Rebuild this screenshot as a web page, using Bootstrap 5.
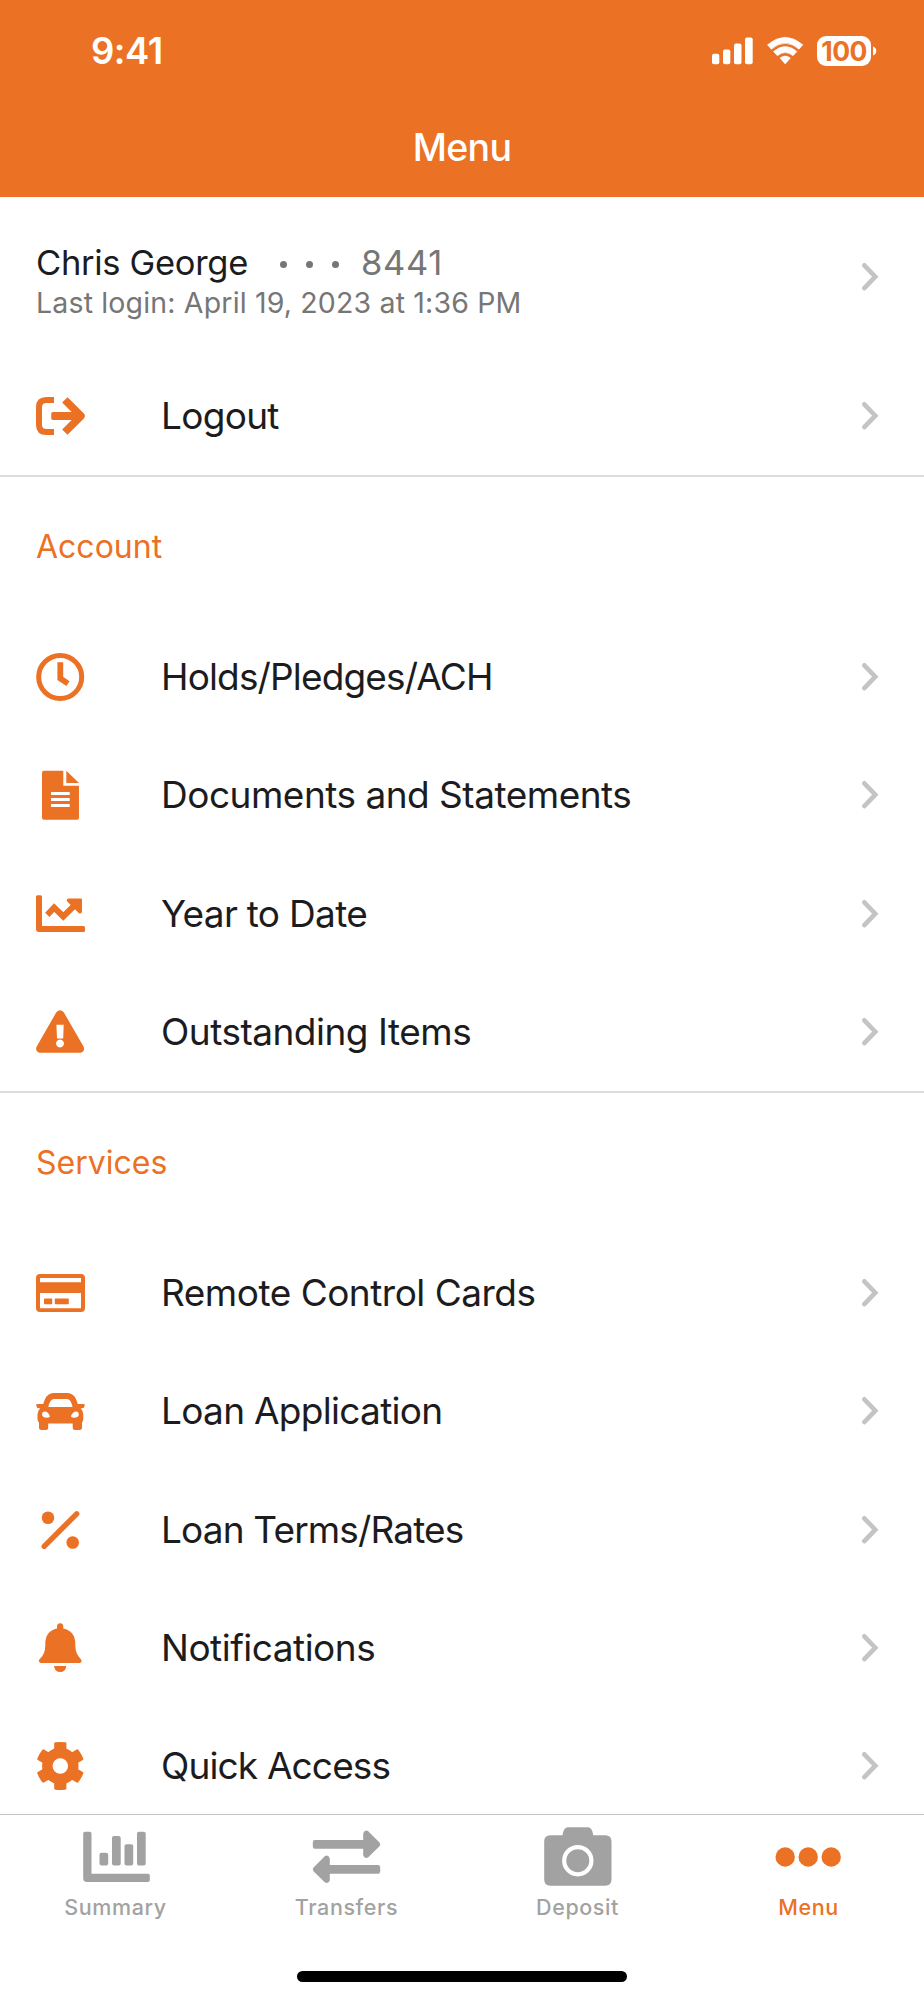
<!DOCTYPE html>
<html lang="en">
<head>
<meta charset="utf-8">
<meta name="viewport" content="width=device-width, initial-scale=1">
<title>Menu</title>
<link href="https://cdn.jsdelivr.net/npm/bootstrap@5.3.0/dist/css/bootstrap.min.css" rel="stylesheet">
<style>
:root{--brand:#eb7125;--ink:#1c1c1e;--muted-ink:#767676}
body{font-family:Inter,"Liberation Sans",sans-serif;color:var(--ink);background:#fff}
.screen{width:924px;height:2000px;overflow:hidden}
.topbar{background:var(--brand);height:197px}
.statusbar{height:101px;padding:0 47px 0 91px}
.clock{font-size:36.5px;font-weight:600;letter-spacing:-.5px;line-height:1;padding-top:1px}
.battery{width:54px;height:30px;border-radius:9px;background:#fff;color:var(--brand);font-size:26.5px;font-weight:700;line-height:30px;letter-spacing:-.6px}
.page-title{font-size:37.5px;font-weight:500;letter-spacing:-.7px;line-height:93px}
.menu-group{border-bottom:2px solid #dcdcdc}
.menu-row{height:118.3px;padding:0 44px 0 36px;color:inherit;text-decoration:none}
.menu-row .glyph{width:50px;height:50px;fill:var(--brand);margin-right:75px;flex:none}
.row-label{font-size:37px;letter-spacing:-.5px;line-height:50px}
.row-label.snug{letter-spacing:-.7px}
.row-label.tight{letter-spacing:-.85px}
.chev{width:20px;height:30px;fill:none;stroke:#c4c4c6;stroke-width:4.6;stroke-linecap:round}
.profile{height:159.7px;padding:46px 44px 0 36px}
.profile .chev{margin-top:19px}
.who{font-size:34.5px;line-height:40px;letter-spacing:-.3px}
.login{font-size:28.5px;line-height:39px;color:var(--muted-ink);letter-spacing:.16px}
.acct{color:var(--muted-ink);letter-spacing:.7px}
.dots{gap:19px;margin:2px 22px 0 8px}
.dot3{width:7px;height:7px;border-radius:50%;background:var(--muted-ink)}
.group-title{color:var(--brand);font-size:32px;line-height:140px;height:140.9px;padding-left:36px}
.tabs{border-top:1px solid #c4c4c6;height:186px;background:#fff}
.tab-item{color:#a2a2a2;font-size:21.5px;font-weight:500;letter-spacing:.6px;line-height:26px;text-decoration:none;padding-top:11px}
.tab-item svg{width:70px;height:62px;fill:currentColor;margin-bottom:6px}
.tab-item.current{color:var(--brand)}
.homebar{width:330px;height:11px;border-radius:6px;background:#000;bottom:18px}
</style>
</head>
<body>
<svg class="d-none"><symbol id="chev" viewBox="0 0 20 30"><path d="M4.300 3.300 15.300 14.700 4.300 26.100"/></symbol></svg>
<div class="screen d-flex flex-column position-relative">
<header class="topbar text-white flex-shrink-0">
  <div class="statusbar d-flex align-items-center justify-content-between">
    <span class="clock">9:41</span>
    <div class="d-flex align-items-center">
      <svg width="105" height="30" viewBox="712 35.500 105 30" fill="#fff">
        <rect x="712" y="53.300" width="7.300" height="10.400" rx="2"/><rect x="723" y="49" width="7.300" height="14.700" rx="2"/><rect x="734" y="43" width="7.500" height="20.700" rx="2"/><rect x="745" y="37" width="7.700" height="26.700" rx="2"/>
        <path d="M767.500 44.300Q785.200 29.300 802.900 44.300L799 48.700Q785.200 37 771.400 48.700ZM773.500 51Q785.200 41.200 796.900 51L793 55.200Q785.200 49 777.400 55.200ZM780 57.500Q785.200 53.700 790.400 57.500L785.200 63.400Z" stroke="#fff" stroke-width=".6" stroke-linejoin="round"/>
      </svg>
      <div class="battery text-center">100</div>
      <svg width="6" height="30" viewBox="0 0 6 30" fill="#fff"><path d="M2 10.500Q5.300 11.800 5.300 15T2 19.500Z"/></svg>
    </div>
  </div>
  <div class="page-title text-center">Menu</div>
</header>
<main class="flex-grow-1 overflow-hidden">
  <section class="menu-group">
    <div class="profile d-flex justify-content-between">
      <div>
        <div class="who d-flex align-items-center"><span class="me-4">Chris George</span><span class="d-flex dots"><i class="dot3"></i><i class="dot3"></i><i class="dot3"></i></span><span class="acct">8441</span></div>
        <div class="login">Last login: April 19, 2023 at 1:36 PM</div>
      </div>
      <svg class="chev"><use href="#chev"/></svg>
    </div>
    <a href="#" class="menu-row d-flex align-items-center"><svg class="glyph" viewBox="0 0 50 50"><path d="M18 9H10.500Q3 9 3 16V34Q3 41 10.500 41H18" fill="none" stroke="#eb7125" stroke-width="6"/><path d="M20 21H17Q15.200 21 15.200 23V27Q15.200 29 17 29H44V21Z"/><path d="M31.500 11.500 45 25 31.500 38.500" fill="none" stroke="#eb7125" stroke-width="7.500" stroke-linecap="square" stroke-linejoin="round"/></svg><span class="row-label snug">Logout</span><svg class="chev ms-auto"><use href="#chev"/></svg></a>
  </section>
  <section class="menu-group">
    <div class="group-title">Account</div>
    <a href="#" class="menu-row d-flex align-items-center"><svg class="glyph" viewBox="0 0 50 50"><circle cx="24.200" cy="25" r="21.500" fill="none" stroke="#eb7125" stroke-width="5"/><path d="M24.300 10.300V26.500L32 31.700" fill="none" stroke="#eb7125" stroke-width="5.800"/></svg><span class="row-label tight">Holds/Pledges/ACH</span><svg class="chev ms-auto"><use href="#chev"/></svg></a>
    <a href="#" class="menu-row d-flex align-items-center"><svg class="glyph" viewBox="0 0 50 50"><path fill-rule="evenodd" d="M8 .7H27.300V15.700H43V47.700Q43 49.700 41 49.700H8Q6 49.700 6 47.700V2.700Q6 .7 8 .7ZM15 22V25H33.700V22ZM15 28V31H33.700V28ZM15 34V37H33.700V34ZM30.300 .7 43 13H30.300Z"/></svg><span class="row-label">Documents and Statements</span><svg class="chev ms-auto"><use href="#chev"/></svg></a>
    <a href="#" class="menu-row d-flex align-items-center"><svg class="glyph" viewBox="0 0 50 50"><path d="M1.500 6.200H4.500Q6 6.200 6 7.700V36.900H47.500Q49 36.900 49 38.400V41.400Q49 42.900 47.500 42.900H3Q0 42.900 0 39.900V7.700Q0 6.200 1.500 6.200ZM32.500 9.600H44.800Q46 9.600 46 10.800V23Q45 25.300 43 24.300L31 12.300Q30 10.300 32.500 9.600Z"/><path d="M11.300 25.900 18.200 18.500 27.300 27.500 41 14" fill="none" stroke="#eb7125" stroke-width="6"/></svg><span class="row-label snug">Year to Date</span><svg class="chev ms-auto"><use href="#chev"/></svg></a>
    <a href="#" class="menu-row d-flex align-items-center"><svg class="glyph" viewBox="0 0 50 50"><path fill-rule="evenodd" d="M20.200 5.500Q24 .8 27.900 5.500L47.500 39.500Q49.500 44.500 44.500 45.800H3.700Q-1.300 44.500.7 39.500ZM20.400 17.800 21 31.500H27.200L27.700 17.800ZM24 32.600A3.900 3.900 0 1 0 24.010 32.600Z"/></svg><span class="row-label">Outstanding Items</span><svg class="chev ms-auto"><use href="#chev"/></svg></a>
  </section>
  <section>
    <div class="group-title">Services</div>
    <a href="#" class="menu-row d-flex align-items-center"><svg class="glyph" viewBox="0 0 50 50"><path fill-rule="evenodd" d="M4 6H45Q49 6 49 10V40Q49 44 45 44H4Q0 44 0 40V10Q0 6 4 6ZM4 10V14.300H45V10ZM4 25V40.200H45V25Z"/><rect x="8" y="30.600" width="8.200" height="5.600" rx=".7"/><rect x="18.800" y="30.600" width="14" height="5.600" rx=".7"/></svg><span class="row-label">Remote Control Cards</span><svg class="chev ms-auto"><use href="#chev"/></svg></a>
    <a href="#" class="menu-row d-flex align-items-center"><svg class="glyph" viewBox="0 0 50 50"><path fill-rule="evenodd" d="M17.500 7H31.500Q37.500 7.300 40 13L41.800 18H47.500Q49 18 48.700 19.300L48 21.500Q47.700 22.300 46 22.200H44.700Q47.300 25 47.300 28.500V33Q47.300 35 46 36.500V41.500Q46 44 43.500 44H39.200Q36.700 44 36.700 41.500V37.500H12.200V41.500Q12.200 44 9.700 44H5.500Q3 44 3 41.500V36.500Q1.500 35 1.500 33V28.500Q1.500 25 4.200 22.200H2.700Q1.200 22.300 1 21.500L.2 19.300Q0 18 1.500 18H7.200L9 13Q11.500 7.300 17.500 7ZM12.300 21H36.500Q35 13 31 13H18Q14 13 12.300 21ZM9 25.500Q6 25.500 6 28.700Q6.500 31.700 11 31.700Q14 31.700 13.800 30Q12 25.700 9 25.500ZM40 25.500Q37 25.700 35 30Q35 31.700 38 31.700Q42.500 31.700 42.800 28.700Q42.800 25.500 40 25.500Z"/></svg><span class="row-label snug">Loan Application</span><svg class="chev ms-auto"><use href="#chev"/></svg></a>
    <a href="#" class="menu-row d-flex align-items-center"><svg class="glyph" viewBox="0 0 50 50"><circle cx="12" cy="12.800" r="6.300"/><circle cx="36.700" cy="37.500" r="6.300"/><path d="M40.700 8.800 8.200 41.300" stroke="#eb7125" stroke-width="5.400" stroke-linecap="round"/></svg><span class="row-label tight">Loan Terms/Rates</span><svg class="chev ms-auto"><use href="#chev"/></svg></a>
    <a href="#" class="menu-row d-flex align-items-center"><svg class="glyph" viewBox="0 0 50 50"><path d="M21 5.500V3.500Q21.300.3 24.200.3T27.300 3.500V5.500Q39 8 39.300 20.500V23Q39.500 30.500 44.300 35.500Q46.500 37.500 45.300 39Q44.700 40 43.300 40H5.300Q4 40 3.300 39Q2 37.500 4.300 35.500Q9.200 30.500 9.300 23V20.500Q9.500 8 21 5.500ZM18 43H30.300Q29.500 49 24.200 49T18 43Z"/></svg><span class="row-label">Notifications</span><svg class="chev ms-auto"><use href="#chev"/></svg></a>
    <a href="#" class="menu-row d-flex align-items-center"><svg class="glyph" viewBox="0 0 50 50"><circle cx="24.300" cy="25" r="13" fill="none" stroke="#eb7125" stroke-width="10.500"/><path id="tooth" d="M18.200 10V2.500Q18.300 1.400 19.500 1.300Q24.300.6 29.200 1.300Q30.300 1.400 30.400 2.500V10Z"/><use href="#tooth" transform="rotate(60 24.300 25)"/><use href="#tooth" transform="rotate(120 24.300 25)"/><use href="#tooth" transform="rotate(180 24.300 25)"/><use href="#tooth" transform="rotate(240 24.300 25)"/><use href="#tooth" transform="rotate(300 24.300 25)"/></svg><span class="row-label tight">Quick Access</span><svg class="chev ms-auto"><use href="#chev"/></svg></a>
  </section>
</main>
<nav class="tabs row g-0 flex-shrink-0 text-center">
  <a href="#" class="tab-item col-3 d-flex flex-column align-items-center"><svg viewBox="0 0 70 62"><path d="M4 5.700H8.700Q10.500 5.700 10.500 7.500V47.700H67Q68.800 47.700 68.800 49.500V54.200Q68.800 56 67 56H6Q2.200 56 2.200 52.200V7.500Q2.200 5.700 4 5.700Z"/><rect x="18.500" y="26.700" width="8.700" height="12.800" rx="2"/><rect x="31" y="10" width="8.700" height="29.500" rx="2"/><rect x="43.500" y="18.300" width="8.700" height="21.200" rx="2"/><rect x="56" y="5.700" width="8.700" height="33.800" rx="2"/></svg>Summary</a>
  <a href="#" class="tab-item col-3 d-flex flex-column align-items-center"><svg viewBox="0 0 70 62"><path d="M3 14H51.200V7.500Q52.500 3.500 56 5L67.500 16.500Q69 18.300 67.500 20.200L56 31.500Q52.500 33 51.200 29.500V22.700H3Q.8 22.700.8 20.500V16.200Q.8 14 3 14ZM66 39H17.800V32.500Q16.500 28.500 13 30L1.500 41.500Q0 43.300 1.500 45.200L13 56.500Q16.500 58 17.800 54.500V47.700H66Q68.200 47.700 68.200 45.500V41.200Q68.200 39 66 39Z"/></svg>Transfers</a>
  <a href="#" class="tab-item col-3 d-flex flex-column align-items-center"><svg viewBox="0 0 70 62"><path d="M7.500 9.300H19.500Q20.500 1.300 25 1.300H45Q49.200 1.300 50.200 9.300H62Q68.500 9.300 68.500 15.500V53.500Q68.500 59.700 62 59.700H7.500Q1.200 59.700 1.200 53.500V15.500Q1.200 9.300 7.500 9.300Z"/><circle cx="34.800" cy="34.700" r="13.600" fill="none" stroke="#fff" stroke-width="4.200"/></svg>Deposit</a>
  <a href="#" class="tab-item current col-3 d-flex flex-column align-items-center"><svg viewBox="0 0 70 62"><circle cx="11.200" cy="31" r="9.700"/><circle cx="34.200" cy="31" r="9.700"/><circle cx="57.200" cy="31" r="9.700"/></svg>Menu</a>
</nav>
<div class="homebar position-absolute start-50 translate-middle-x"></div>
</div>
<script src="https://cdn.jsdelivr.net/npm/bootstrap@5.3.0/dist/js/bootstrap.bundle.min.js"></script>
</body>
</html>
